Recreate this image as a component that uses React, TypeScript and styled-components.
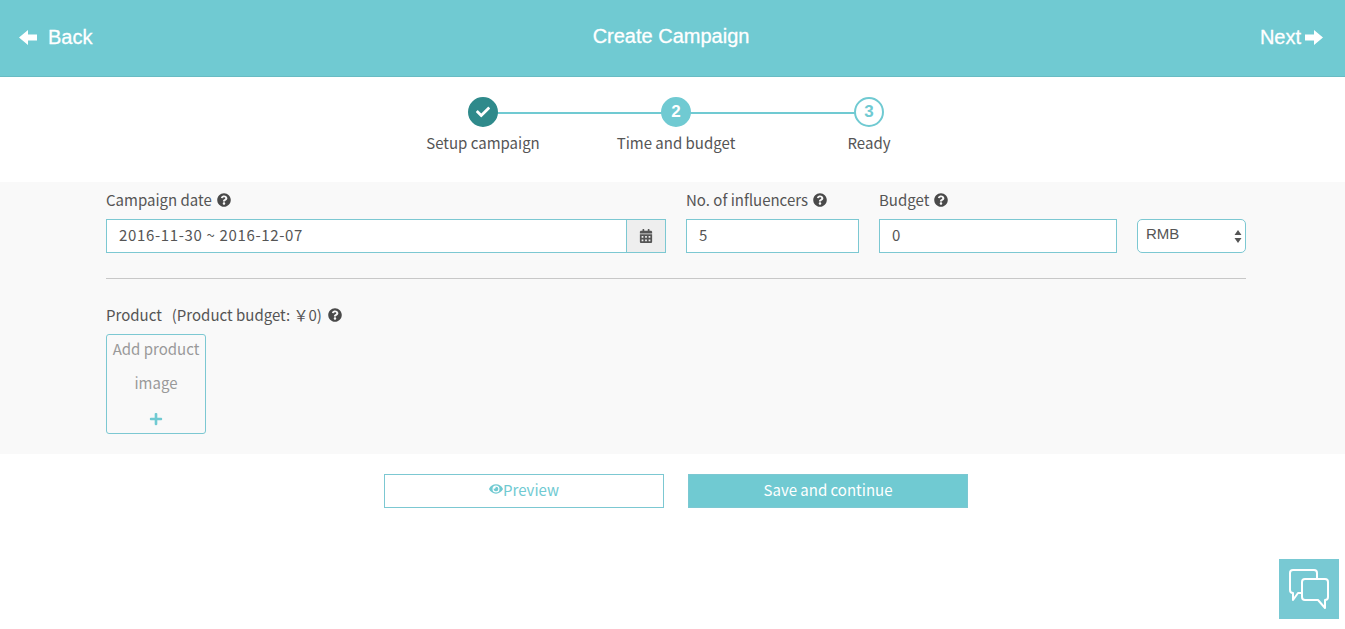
import React from 'react'
import styled, { createGlobalStyle } from 'styled-components'
import { FaCheck, FaQuestionCircle, FaCalendarAlt, FaEye, FaPlus } from 'react-icons/fa'

const TEAL = '#70cad2'
const BORDER = '#7cc8d2'
const TEXT = '#555555'
const BODY_FONT = '"Noto Sans CJK JP", "Noto Sans", sans-serif'

const GlobalStyle = createGlobalStyle`
  html, body {
    margin: 0;
    background: #fff;
    overflow: hidden;
  }
  * { box-sizing: border-box; }
`

const Page = styled.div`
  height: 629px;
  font-family: ${BODY_FONT};
  color: ${TEXT};
`

const Header = styled.header`
  height: 77px;
  background: ${TEAL};
  border-bottom: 1px solid #68bbc3;
  display: flex;
  align-items: center;
  justify-content: space-between;
  padding: 0 22px 2px 19px;
  color: #fff;
  font-family: "Liberation Sans", Arial, sans-serif;
  font-size: 20px;
  -webkit-text-stroke: 0.3px #fff;
`

const NavLink = styled.a<{ $right?: boolean }>`
  display: flex;
  align-items: center;
  gap: ${(p) => (p.$right ? 4 : 11)}px;
  width: 100px;
  justify-content: ${(p) => (p.$right ? 'flex-end' : 'flex-start')};
`

const Title = styled.h1`
  margin: 0 0 2px 0;
  font-size: 20px;
  font-weight: normal;
`

const Stepper = styled.ol`
  list-style: none;
  margin: 0 0 0 386.5px;
  padding: 20px 0 0;
  width: 579px;
  height: 105px;
  display: grid;
  grid-template-columns: repeat(3, 193px);
`

const Step = styled.li<{ $line: boolean }>`
  position: relative;
  display: flex;
  flex-direction: column;
  align-items: center;
  gap: 3px;
  font-size: 15px;
  line-height: 26px;
  &::after {
    content: '';
    display: ${(p) => (p.$line ? 'block' : 'none')};
    position: absolute;
    top: 15px;
    left: 50%;
    width: 193px;
    height: 2px;
    background: ${TEAL};
  }
`

const StepDot = styled.span<{ $state: 'done' | 'active' | 'todo' }>`
  position: relative;
  z-index: 1;
  width: 30px;
  height: 30px;
  border-radius: 50%;
  display: flex;
  align-items: center;
  justify-content: center;
  font-family: "Liberation Sans", Arial, sans-serif;
  font-weight: bold;
  font-size: 17px;
  border: 2px solid ${(p) => (p.$state === 'done' ? '#2f8a8b' : TEAL)};
  background: ${(p) => (p.$state === 'done' ? '#2f8a8b' : p.$state === 'active' ? TEAL : '#fff')};
  color: ${(p) => (p.$state === 'todo' ? TEAL : '#fff')};
  svg { font-size: 14px; }
`

const Band = styled.section`
  background: #f9f9f9;
  height: 272px;
  padding: 7px 0 0 106px;
`

const Form = styled.div`
  width: 1140px;
`

const FieldRow = styled.div`
  display: grid;
  grid-template-columns: 560px 173px 238px 109px;
  column-gap: 20px;
  align-items: end;
  padding-bottom: 25px;
  border-bottom: 1px solid #c8c8c8;
`

const Field = styled.div`
  display: flex;
  flex-direction: column;
  gap: 8px;
`

const Label = styled.label`
  display: flex;
  align-items: center;
  gap: 5px;
  font-size: 15px;
  line-height: 22px;
  height: 22px;
  svg { font-size: 14px; color: #4a4a4a; }
`

const Input = styled.div`
  height: 34px;
  border: 1px solid ${BORDER};
  background: #fff;
  padding: 0 12px;
  font-size: 15px;
  letter-spacing: 0.65px;
  line-height: 30px;
`

const DateInput = styled(Input)`
  flex: 1;
  border-right: 0;
`

const InputGroup = styled.div`
  display: flex;
`

const Addon = styled.span`
  width: 40px;
  height: 34px;
  border: 1px solid ${BORDER};
  background: #eeeeee;
  display: flex;
  align-items: center;
  justify-content: center;
  svg { font-size: 14px; color: #555; }
`

const Select = styled.div`
  position: relative;
  height: 34px;
  border: 1px solid ${BORDER};
  border-radius: 5px;
  background: #fff;
  padding-left: 8px;
  font-family: "Liberation Sans", Arial, sans-serif;
  font-size: 15px;
  line-height: 28px;
`

const SelectCaret = styled.svg`
  position: absolute;
  right: 3px;
  top: 10px;
`

const ProductLabel = styled(Label)`
  margin-top: 25px;
  gap: 6px;
`

const ProductBudget = styled.span`
  margin-left: 4px;
`

const AddImage = styled.button`
  display: flex;
  flex-direction: column;
  align-items: center;
  margin-top: 8px;
  width: 100px;
  height: 100px;
  border: 1px solid ${BORDER};
  border-radius: 3px;
  background: transparent;
  padding: 0;
  font-family: ${BODY_FONT};
  font-size: 15px;
  line-height: 34px;
  color: #999;
  span:first-child { margin-top: -3px; }
  svg { margin-top: 12px; font-size: 14px; color: ${TEAL}; }
`

const Actions = styled.div`
  display: flex;
  gap: 24px;
  margin: 20px 0 0 384px;
`

const ActionButton = styled.button<{ $primary?: boolean }>`
  width: 280px;
  height: 34px;
  border: 1px solid ${BORDER};
  background: ${(p) => (p.$primary ? TEAL : '#fff')};
  color: ${(p) => (p.$primary ? '#fff' : TEAL)};
  font-family: ${BODY_FONT};
  font-size: 15px;
  display: flex;
  align-items: center;
  justify-content: center;
  padding: 0 0 4px;
  svg { font-size: 14px; }
`

const ChatButton = styled.a`
  position: fixed;
  left: 1279px;
  top: 559px;
  width: 60px;
  height: 60px;
  background: #78c9d3;
  display: flex;
  align-items: center;
  justify-content: center;
`

const Help = () => <FaQuestionCircle />

const BackArrow = () => (
  <svg width="18" height="15" viewBox="0 0 18 15" fill="currentColor" stroke="none">
    <path d="M0 7.5L9 0v4.5h9v6H9V15z" />
  </svg>
)

const NextArrow = () => (
  <svg width="18" height="15" viewBox="0 0 18 15" fill="currentColor" stroke="none">
    <path d="M18 7.5L9 0v4.5H0v6h9V15z" />
  </svg>
)

const ChatIcon = () => (
  <svg width="40" height="40" viewBox="0 0 40 40" fill="none" stroke="#fff" strokeWidth="2" strokeLinejoin="round">
    <path d="M13 24H9l-5 7v-7c-2 0-3-1-3-3V4c0-2 1-3 3-3h21c2 0 3 1 3 3v6" />
    <path d="M16 10h20c2 0 3 1 3 3v15c0 2-1 3-3 3v8l-7-8H16c-2 0-3-1-3-3V13c0-2 1-3 3-3z" />
  </svg>
)

const App = () => {
  return (
    <Page>
      <GlobalStyle />
      <Header>
        <NavLink><BackArrow /> Back</NavLink>
        <Title>Create Campaign</Title>
        <NavLink $right>Next <NextArrow /></NavLink>
      </Header>

      <Stepper>
        <Step $line>
          <StepDot $state="done"><FaCheck /></StepDot>
          Setup campaign
        </Step>
        <Step $line>
          <StepDot $state="active">2</StepDot>
          Time and budget
        </Step>
        <Step $line={false}>
          <StepDot $state="todo">3</StepDot>
          Ready
        </Step>
      </Stepper>

      <Band>
        <Form>
          <FieldRow>
            <Field>
              <Label>Campaign date <Help /></Label>
              <InputGroup>
                <DateInput>2016-11-30 ~ 2016-12-07</DateInput>
                <Addon><FaCalendarAlt /></Addon>
              </InputGroup>
            </Field>
            <Field>
              <Label>No. of influencers <Help /></Label>
              <Input>5</Input>
            </Field>
            <Field>
              <Label>Budget <Help /></Label>
              <Input>0</Input>
            </Field>
            <Select>
              RMB
              <SelectCaret width="8" height="13" viewBox="0 0 8 13" fill="#555">
                <path d="M4 0l3.5 5H.5zM4 13L.5 8h7z" />
              </SelectCaret>
            </Select>
          </FieldRow>

          <ProductLabel>
            Product <ProductBudget>(Product budget: ￥0)</ProductBudget> <Help />
          </ProductLabel>
          <AddImage>
            <span>Add product</span>
            <span>image</span>
            <FaPlus />
          </AddImage>
        </Form>
      </Band>

      <Actions>
        <ActionButton><FaEye />Preview</ActionButton>
        <ActionButton $primary>Save and continue</ActionButton>
      </Actions>

      <ChatButton><ChatIcon /></ChatButton>
    </Page>
  )
}

export default App
